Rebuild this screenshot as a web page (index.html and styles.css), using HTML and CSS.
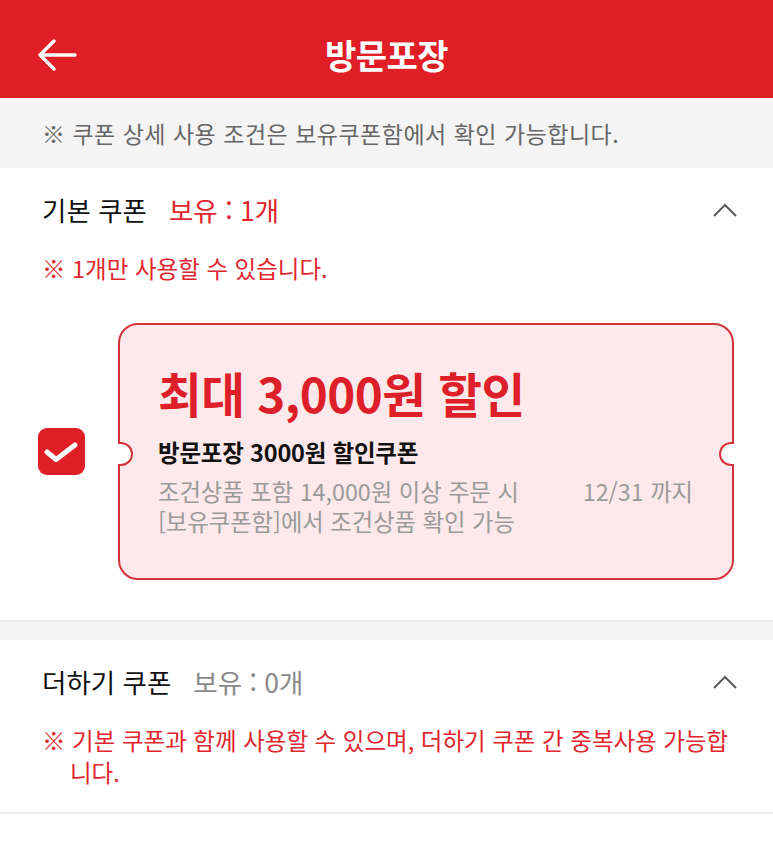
FILE: index.html
```html
<!DOCTYPE html>
<html lang="ko">
<head>
<meta charset="utf-8">
<title>방문포장</title>
<link rel="stylesheet" href="styles.css">
</head>
<body>
<header class="appbar">
  <button class="back" aria-label="뒤로">
    <svg width="40" height="34" viewBox="0 0 40 34"><path d="M38 17H3M17 3L3 17L17 31" fill="none" stroke="#fff" stroke-width="3.4" stroke-linecap="round" stroke-linejoin="round"/></svg>
  </button>
  <h1 class="appbar-title">방문포장</h1>
  <span class="appbar-spacer"></span>
</header>

<div class="notice">※ 쿠폰 상세 사용 조건은 보유쿠폰함에서 확인 가능합니다.</div>

<section class="coupon-section">
  <div class="sec-head">
    <h2 class="sec-title">기본 쿠폰</h2>
    <span class="sec-count is-red">보유 : 1개</span>
    <svg class="chev" width="26" height="16" viewBox="0 0 26 16"><path d="M2 14L13 3L24 14" fill="none" stroke="#5a5a5a" stroke-width="2"/></svg>
  </div>
  <p class="sec-note">※ 1개만 사용할 수 있습니다.</p>
  <div class="coupon-row">
    <span class="checkbox">
      <svg width="47" height="47" viewBox="0 0 47 47"><path d="M9 24L18 31.5L37 17" fill="none" stroke="#fff" stroke-width="5" stroke-linecap="round" stroke-linejoin="round"/></svg>
    </span>
    <div class="ticket">
      <div class="ticket-amount">최대 3,000원 할인</div>
      <div class="ticket-name">방문포장 3000원 할인쿠폰</div>
      <div class="ticket-line"><span>조건상품 포함 14,000원 이상 주문 시</span><span>12/31 까지</span></div>
      <div class="ticket-line">[보유쿠폰함]에서 조건상품 확인 가능</div>
    </div>
  </div>
</section>

<div class="divider"></div>

<section class="coupon-section is-last">
  <div class="sec-head">
    <h2 class="sec-title">더하기 쿠폰</h2>
    <span class="sec-count is-gray">보유 : 0개</span>
    <svg class="chev" width="26" height="16" viewBox="0 0 26 16"><path d="M2 14L13 3L24 14" fill="none" stroke="#5a5a5a" stroke-width="2"/></svg>
  </div>
  <p class="sec-note hang">※ 기본 쿠폰과 함께 사용할 수 있으며, 더하기 쿠폰 간 중복사용 가능합니다.</p>
</section>
</body>
</html>
```

FILE: styles.css
```css
* { box-sizing: border-box; }
html, body {
  margin: 0;
  padding: 0;
  background: #fff;
}
body {
  width: 773px;
  font-family: "Noto Sans CJK KR", "Noto Sans", sans-serif;
  color: #111;
}

.appbar {
  height: 98px;
  padding-top: 12px;
  background: #df1e26;
  display: grid;
  grid-template-columns: 1fr auto 1fr;
  align-items: center;
}
.back {
  justify-self: start;
  margin-left: 37px;
  padding: 0;
  border: 0;
  background: none;
  width: 40px;
  height: 34px;
  display: flex;
}
.appbar-title {
  margin: 0;
  color: #fff;
  font-size: 34px;
  font-weight: 700;
  line-height: 44px;
  letter-spacing: -0.5px;
}

.notice {
  height: 70px;
  background: #f4f4f4;
  padding: 0 42px;
  display: flex;
  align-items: center;
  font-size: 23px;
  color: #666;
  letter-spacing: 0.5px;
}

.coupon-section {
  padding: 25px 0 40px;
}
.coupon-section.is-last {
  padding-bottom: 24px;
  border-bottom: 2px solid #e9e9e9;
}

.sec-head {
  display: flex;
  align-items: center;
  height: 34px;
  padding: 0 35px 0 42px;
}
.sec-title {
  margin: 0;
  font-size: 26.5px;
  font-weight: 400;
  color: #111;
  line-height: 34px;
}
.sec-count {
  margin-left: 22px;
  font-size: 26.5px;
  line-height: 34px;
}
.sec-count.is-red { color: #e0262e; }
.sec-count.is-gray { color: #8a8a8a; }
.chev { margin-left: auto; }

.sec-note {
  margin: 25px 0 0;
  padding: 0 40px 0 42px;
  font-size: 23.5px;
  line-height: 32px;
  color: #e0262e;
}
.sec-note.hang {
  padding-left: 70px;
  text-indent: -28px;
}

.coupon-row {
  margin-top: 39px;
  padding: 0 39px 0 38px;
  display: flex;
  align-items: center;
  gap: 33px;
}
.checkbox {
  flex: none;
  width: 47px;
  height: 47px;
  border-radius: 9px;
  background: #df1e26;
  display: flex;
}

.ticket {
  position: relative;
  flex: 1;
  height: 257px;
  padding: 40px 39px 0 38px;
  background: #fde9eb;
  border: 2px solid #d3343c;
  border-radius: 20px;
}
.ticket::before,
.ticket::after {
  content: "";
  position: absolute;
  top: 50%;
  width: 13px;
  height: 20px;
  margin-top: -10px;
  background: #fff;
  border: 2px solid #d3343c;
}
.ticket::before {
  left: -2px;
  border-left: none;
  border-radius: 0 12px 12px 0;
}
.ticket::after {
  right: -2px;
  border-right: none;
  border-radius: 12px 0 0 12px;
}

.ticket-amount {
  font-size: 47.5px;
  font-weight: 700;
  line-height: 56px;
  color: #dc1f29;
  letter-spacing: -0.5px;
}
.ticket-name {
  margin-top: 15px;
  font-size: 23.5px;
  font-weight: 700;
  line-height: 32px;
  color: #111;
  letter-spacing: -0.2px;
}
.ticket-line {
  font-size: 23.3px;
  line-height: 30px;
  color: #9a9a9a;
  display: flex;
  justify-content: space-between;
}
.ticket-name + .ticket-line { margin-top: 8px; }

.divider {
  height: 20px;
  background: #f4f4f4;
  border-top: 2px solid #e8e8e8;
}
```
